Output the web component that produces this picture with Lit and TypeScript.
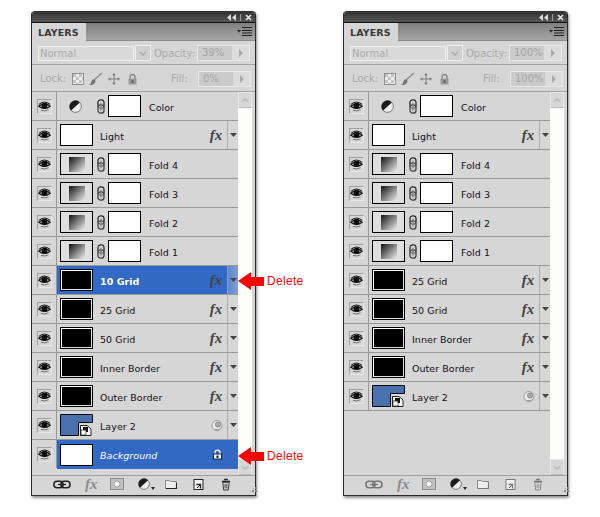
import { LitElement, html, css, svg } from "lit";
import { customElement } from "lit/decorators.js";

type Layer = {
  name: string;
  kind: "adjust" | "white" | "fold" | "black" | "smart" | "bg";
  fx?: boolean;
  selected?: boolean;
};

const top: Layer[] = [
  { name: "Color", kind: "adjust" },
  { name: "Light", kind: "white", fx: true },
  { name: "Fold 4", kind: "fold" },
  { name: "Fold 3", kind: "fold" },
  { name: "Fold 2", kind: "fold" },
  { name: "Fold 1", kind: "fold" },
];
const tail: Layer[] = [
  { name: "25 Grid", kind: "black", fx: true },
  { name: "50 Grid", kind: "black", fx: true },
  { name: "Inner Border", kind: "black", fx: true },
  { name: "Outer Border", kind: "black", fx: true },
  { name: "Layer 2", kind: "smart" },
];
const leftLayers: Layer[] = [
  ...top,
  { name: "10 Grid", kind: "black", fx: true, selected: true },
  ...tail,
  { name: "Background", kind: "bg", selected: true },
];
const rightLayers: Layer[] = [...top, ...tail];

const eye = html`<svg class="eye" viewBox="0 0 13 11" width="13" height="11">
  <path d="M.8 5.2 Q6.5 .2 12.2 5.2 Q6.5 9.6 .8 5.2Z" fill="#d0d0d0" stroke="#111" stroke-width="1.2"/>
  <path d="M1 3.4 Q6.5 -1.4 12 3.4" fill="none" stroke="#111" stroke-width="1.1"/>
  <circle cx="6.5" cy="4.8" r="3" fill="#080808"/>
  <path d="M3 9.4 Q7 10.8 10.5 8.8" fill="none" stroke="#666" stroke-width=".9"/>
</svg>`;

const chain = html`<svg class="chain" viewBox="0 0 8 15" width="8" height="15">
  <rect x="1" y=".8" width="6" height="8.4" rx="2.8" fill="#ddd" stroke="#2a2a2a" stroke-width="1.3"/>
  <rect x="1" y="5.8" width="6" height="8.4" rx="2.8" fill="#ccc" fill-opacity=".5" stroke="#444" stroke-width="1.3"/>
  <path d="M4 3.5V11.5" stroke="#777" stroke-width="1.2"/>
</svg>`;

const halfCircle = (size: number) => html`<svg viewBox="0 0 12 12" width=${size} height=${size}>
  <circle cx="6" cy="6" r="5.4" fill="#eee" stroke="#666" stroke-width=".8"/>
  <path d="M10 2.2A5.4 5.4 0 0 0 2 9.8Z" fill="#1c1c1c"/>
</svg>`;

const smartThumb = html`<svg class="thumbsvg" viewBox="0 0 33 22" width="33" height="22">
  <path d="M.5 .5H32.5V8.5H18.5V21.5H.5Z" fill="#4a71ad" stroke="#0a0a0a"/>
  <path d="M20.5 11.5H27L31 15V21.5H20.5Z" fill="#fff" stroke="#222"/>
  <rect x="23" y="13" width="5" height="5" fill="#111"/>
  <rect x="21" y="16" width="5" height="5" fill="#fff" stroke="#222" stroke-width=".7"/>
</svg>`;

const smartBadge = html`<svg viewBox="0 0 13 13" width="13" height="13">
  <circle cx="6" cy="6.5" r="5" fill="#eaeaea" stroke="#a0a0a0"/>
  <circle cx="7" cy="5.5" r="2.6" fill="#aaa" stroke="#777" stroke-width=".7"/>
  <path d="M4 10.5Q8 12 11 8" fill="none" stroke="#999"/>
</svg>`;

const lockWhite = html`<svg viewBox="0 0 11 11" width="11" height="11">
  <path d="M3 5V3.6A2.5 2.5 0 0 1 8 3.6V5" fill="none" stroke="#fff" stroke-width="1.3"/>
  <rect x="1" y="4.5" width="9" height="6" fill="#123" />
  <rect x="2" y="5.5" width="7" height="4" fill="#fff"/>
  <rect x="4.5" y="6.5" width="2" height="2.4" fill="#111"/>
</svg>`;

const redArrow = html`<svg viewBox="0 0 26 18" width="26" height="18">
  <path d="M0 9 L13 0 V5 H26 V14 H13 V18Z" fill="#f00"/>
</svg>`;

const icons = {
  collapse: html`<svg viewBox="0 0 9 7" width="9" height="7"><path d="M4 0V7L0 3.5ZM9 0V7L5 3.5Z" fill="#ddd"/></svg>`,
  close: html`<svg viewBox="0 0 7 7" width="7" height="7"><path d="M1 1L6 6M6 1L1 6" stroke="#e4e4e4" stroke-width="1.7"/></svg>`,
  menu: html`<svg viewBox="0 0 15 9" width="15" height="9">
    <path d="M0 3H4L2 5.4Z" fill="#222"/>
    <path d="M5 .5H15M5 3.5H15M5 6H15M5 8.5H15" stroke="#222" stroke-width="1"/>
  </svg>`,
  checker: html`<svg viewBox="0 0 12 12" width="12" height="12">
    <rect x=".5" y=".5" width="11" height="11" fill="#eee" stroke="#8e8e8e"/>
    <path d="M1 1h3v3H1zM7 1h3v3H7zM4 4h3v3H4zM10 4h1v3h-1zM1 7h3v3H1zM7 7h3v3H7zM4 10h3v1H4z" fill="#c4c4c4"/>
  </svg>`,
  brush: html`<svg viewBox="0 0 15 14" width="15" height="14">
    <path d="M14 1L6 8" stroke="#888" stroke-width="1.2"/>
    <path d="M6.5 7.5C3.5 7 3.5 9.5 3 11 2.5 12 1.5 12.5 1 12.5 4 14 7.5 12 7.6 9Z" fill="#777"/>
  </svg>`,
  move: html`<svg viewBox="0 0 13 13" width="12" height="12">
    <path d="M6.5 1V12M1 6.5H12" stroke="#777" stroke-width="1"/>
    <path d="M6.5 0L8.5 2.5H4.5ZM6.5 13L8.5 10.5H4.5ZM0 6.5L2.5 4.5V8.5ZM13 6.5L10.5 4.5V8.5Z" fill="#777"/>
  </svg>`,
  lock: html`<svg viewBox="0 0 11 12" width="11" height="12">
    <path d="M3 6V4A2.5 2.5 0 0 1 8 4V6" fill="none" stroke="#888" stroke-width="1.3"/>
    <rect x="1.5" y="5.5" width="8" height="6" fill="#999"/>
    <rect x="4.5" y="7" width="2" height="3" fill="#666"/>
  </svg>`,
  link: (c: string) => html`<svg viewBox="0 0 18 9" width="18" height="9">
    <rect x="1" y="1.2" width="9" height="6.6" rx="3" fill="none" stroke=${c} stroke-width="1.6"/>
    <rect x="8" y="1.2" width="9" height="6.6" rx="3" fill="none" stroke=${c} stroke-width="1.6"/>
    <path d="M5 4.5H13" stroke=${c} stroke-width="1.2"/>
  </svg>`,
  mask: html`<svg viewBox="0 0 14 12" width="14" height="12">
    <rect x=".5" y=".5" width="13" height="11" fill="#c0c0c0" stroke="#8c8c8c"/>
    <circle cx="7" cy="6" r="3" fill="#f6f6f6" stroke="#8a8a8a" stroke-width=".6"/>
  </svg>`,
  folder: (c: string) => html`<svg viewBox="0 0 12 10" width="12" height="10">
    <path d="M.5 1.5H4.5L5.5 2.5H11.5V9.5H.5Z" fill="#ededed" stroke="#888"/>
    <path d="M1 9.5H11.5V4" fill="none" stroke=${c} stroke-width="1.2"/>
  </svg>`,
  page: (c: string) => html`<svg viewBox="0 0 11 11" width="11" height="11">
    <rect x="1" y=".5" width="9" height="10" fill="#f2f2f2" stroke=${c}/>
    <path d="M3.5 5.5H7.5V9.5" fill="none" stroke=${c} stroke-width="1.3"/>
    <path d="M4 9L7 6" stroke=${c}/>
  </svg>`,
  trash: (c: string) => html`<svg viewBox="0 0 11 14" width="10" height="13">
    <path d="M3.5 1.5H7.5M1 3.5H10" stroke=${c} stroke-width="1.4"/>
    <path d="M2 4.5L3 13H8L9 4.5Z" fill="#eee" stroke=${c}/>
    <path d="M4.5 6V11.5M6.5 6V11.5" stroke=${c}/>
  </svg>`,
};

const triangle = svg`<path d="M0 0H7L3.5 4Z" fill="#444"/>`;

@customElement("layer-panel")
class LayerPanel extends LitElement {
  static properties = {
    layers: { attribute: false },
    opacity: {},
    fill: {},
    faint: { type: Boolean },
  };
  layers: Layer[] = [];
  opacity = "";
  fill = "";
  faint = false;

  static styles = css`
    :host {
      display: block;
      width: 225px;
      height: 485px;
      box-sizing: border-box;
      border: 1px solid #2a2a2a;
      border-top-color: #333;
      border-radius: 4px 4px 0 0;
      background: #d6d6d6;
      box-shadow: 1px 2px 3px rgba(0, 0, 0, 0.45);
      font: 9.5px "DejaVu Sans", sans-serif;
      color: #111;
    }
    .frame { display: flex; flex-direction: column; height: 100%; }
    .title {
      height: 11px;
      flex: none;
      background: linear-gradient(#333, #565656);
      border-bottom: 1px solid #111;
      box-sizing: border-box;
      display: flex;
      align-items: center;
      justify-content: flex-end;
      gap: 4px;
      padding-right: 3px;
      border-radius: 3px 3px 0 0;
    }
    .sep { width: 1px; height: 7px; background: #999; }
    .tabs {
      height: 18px;
      flex: none;
      display: flex;
      background: linear-gradient(#7f7f7f, #a4a4a4);
      border-bottom: 1px solid #8a8a8a;
      box-sizing: border-box;
    }
    .tab {
      width: 54px;
      padding-left: 6px;
      box-sizing: border-box;
      height: 18px;
      line-height: 19px;
      background: #d6d6d6;
      font-weight: bold;
      font-size: 9.5px;
      color: #3a3a3a;
      letter-spacing: 0.1px;
    }
    .tabgap { flex: 1; display: flex; justify-content: flex-end; align-items: center; padding-right: 3px; }
    .opts, .locks {
      flex: none;
      display: flex;
      align-items: center;
      box-sizing: border-box;
      color: #a9a9a9;
      padding: 1px 0 0 6px;
      border-bottom: 1px solid #a2a2a2;
    }
    .opts { height: 24px; }
    .locks { height: 27px; }
    .select {
      width: 96px;
      height: 15px;
      line-height: 13px;
      box-sizing: border-box;
      border: 1px solid #efefef;
      background: #dadada;
      padding-left: 1px;
      font-size: 10px;
    }
    .dd {
      width: 16px;
      height: 16px;
      margin-left: 1px;
      background: #cfcfcf;
      border: 1px solid #eee;
      box-sizing: border-box;
      display: flex;
      align-items: center;
      justify-content: center;
    }
    .oplabel { margin-left: 3px; width: 43px; font-size: 10px; }
    .field { display: flex; width: 53px; height: 16px; margin-left: 0; border: 1px solid #e8e8e8; box-sizing: border-box; }
    .value { flex: 1; background: #cbcbcb; line-height: 14px; padding-left: 4px; font-size: 10px; color: #a4a4a4; }
    .stepper { width: 17px; background: #dcdcdc; display: flex; align-items: center; justify-content: center; }
    .stepper i { border-left: 4px solid #aaa; border-top: 4px solid transparent; border-bottom: 4px solid transparent; }
    .locklabel { width: 34px; padding-left: 2px; box-sizing: border-box; font-size: 10px; }
    .lockicons {
      display: grid;
      grid-template-columns: 16px 20px 19px auto;
      align-items: center;
      width: 99px;
    }
    .filllabel { width: 27px; font-size: 10px; }
    .body { flex: 1; display: flex; min-height: 0; }
    .list { width: 206px; flex: none; }
    .row {
      display: flex;
      height: 29px;
      box-sizing: border-box;
      border-bottom: 1px solid #999;
      align-items: stretch;
    }
    .eyecell {
      width: 25px;
      flex: none;
      background: #d6d6d6;
      border-right: 1px solid #999;
      box-sizing: border-box;
      display: flex;
      align-items: center;
      justify-content: center;
    }
    .eyebox {
      width: 15px;
      height: 15px;
      box-sizing: border-box;
      border: 1px solid;
      border-color: #a0a0a0 #e6e6e6 #e6e6e6 #a0a0a0;
      display: flex;
      align-items: center;
      justify-content: center;
    }
    .main { flex: 1; display: flex; align-items: center; padding-left: 3px; min-width: 0; }
    .selected .main { background: #3169c4; color: #fff; }
    .row.bg { border-bottom-color: #d6d6d6; }
    .row.bg .main { margin-bottom: -1px; }
    .thumb {
      width: 33px;
      height: 22px;
      box-sizing: border-box;
      flex: none;
      border: 1px solid #000;
      background: #fff;
    }
    .thumb.black { background: #000; box-shadow: inset 1px 1px 0 0 #fff, inset -1px -1px 0 0 #ddd; }
    .thumb.fold { background: #dfdfdf; display: flex; align-items: center; justify-content: center; }
    .thumb.fold i { display: block; width: 16px; height: 15px; background: linear-gradient(135deg, #111, #f0f0f0); }
    .thumbsvg { display: block; flex: none; }
    .adj { width: 33px; display: flex; justify-content: center; flex: none; padding-right: 2px; box-sizing: border-box; }
    .chaincell { width: 15px; flex: none; display: flex; justify-content: center; }
    .name { margin-left: 7px; flex: 1; white-space: nowrap; letter-spacing: 0.05px; padding-top: 2px; }
    .hasmask .name { margin-left: 8px; }
    .row .b { font-weight: bold; }
    .row .i { font-style: italic; }
    .fx {
      font: italic bold 15px "Liberation Serif", serif;
      color: #444;
      width: 20px;
      flex: none;
      text-align: center;
      padding-right: 2px;
      box-sizing: border-box;
      line-height: 16px;
    }
    .badge { width: 20px; flex: none; display: flex; justify-content: center; }
    .badge.end { margin-right: 11px; }
    .more {
      width: 11px;
      flex: none;
      border-left: 1px solid #aaa;
      box-sizing: border-box;
      background: #d6d6d6;
      display: flex;
      align-items: center;
      justify-content: center;
    }
    .selected .more { background: linear-gradient(90deg, #5f87ca, #7d9fd8); border-left-color: #7fa0d8; }
    .scroll {
      width: 14px;
      flex: none;
      display: flex;
      flex-direction: column;
      background: #fdfdfb;
    }
    .sb { height: 16px; background: #d6d6d6; border: 1px solid #e8e8e8; border-bottom-color: #bbb; box-sizing: border-box; display: flex; align-items: center; justify-content: center; }
    .track { flex: 1; }
    .foot {
      height: 20px;
      flex: none;
      border-top: 1px solid #a0a0a0;
      box-sizing: border-box;
      display: grid;
      grid-template-columns: 32px 25px 28px 27px 28px 28px 28px 1fr;
      align-items: center;
      justify-items: start;
      padding: 0 0 3px 21px;
      background: #d6d6d6;
    }
    .foot .ffx { font: italic bold 15px "Liberation Serif", serif; color: #8a8a8a; line-height: 15px; }
    .adjfoot { display: flex; align-items: flex-end; gap: 1px; }
    .adjfoot i { border-top: 3px solid #222; border-left: 2px solid transparent; border-right: 2px solid transparent; }
    .grip {
      justify-self: end;
      align-self: end;
      width: 9px;
      height: 9px;
      margin: 0 1px -1px 0;
      background: radial-gradient(circle at 1px 1px, #888 1px, transparent 1px) 0 0 / 3px 3px;
      clip-path: polygon(100% 0, 100% 100%, 0 100%);
    }
  `;

  private thumb(l: Layer) {
    if (l.kind === "adjust") return html`<div class="adj">${halfCircle(13)}</div>`;
    if (l.kind === "fold") return html`<div class="thumb fold"><i></i></div>`;
    if (l.kind === "black") return html`<div class="thumb black"></div>`;
    if (l.kind === "smart") return smartThumb;
    return html`<div class="thumb"></div>`;
  }

  private row(l: Layer) {
    const masked = l.kind === "adjust" || l.kind === "fold";
    const more = l.fx || l.kind === "smart";
    return html`<div class="row ${l.selected ? "selected" : ""} ${l.kind === "bg" ? "bg" : ""} ${masked ? "hasmask" : ""}">
      <div class="eyecell"><div class="eyebox">${eye}</div></div>
      <div class="main">
        ${this.thumb(l)}
        ${masked ? html`<div class="chaincell">${chain}</div><div class="thumb"></div>` : ""}
        <div class="name ${l.kind === "bg" ? "i" : ""} ${l.selected && l.kind === "black" ? "b" : ""}">${l.name}</div>
        ${l.fx ? html`<div class="fx">fx</div>` : ""}
        ${l.kind === "smart" ? html`<div class="badge">${smartBadge}</div>` : ""}
        ${l.kind === "bg" ? html`<div class="badge end">${lockWhite}</div>` : ""}
      </div>
      ${more ? html`<div class="more"><svg viewBox="0 0 7 4" width="7" height="4">${triangle}</svg></div>` : ""}
    </div>`;
  }

  render() {
    const c = this.faint ? "#777" : "#222";
    return html`<div class="frame">
      <div class="title">${icons.collapse}<span class="sep"></span>${icons.close}</div>
      <div class="tabs">
        <div class="tab">LAYERS</div>
        <div class="tabgap">${icons.menu}</div>
      </div>
      <div class="opts">
        <div class="select">Normal</div>
        <div class="dd"><svg viewBox="0 0 8 5" width="8" height="5"><path d="M1 1L4 4L7 1" fill="none" stroke="#aaa" stroke-width="1.6"/></svg></div>
        <div class="oplabel">Opacity:</div>
        <div class="field"><div class="value">${this.opacity}</div><div class="stepper"><i></i></div></div>
      </div>
      <div class="locks">
        <div class="locklabel">Lock:</div>
        <div class="lockicons">${icons.checker}${icons.brush}${icons.move}${icons.lock}</div>
        <div class="filllabel">Fill:</div>
        <div class="field"><div class="value">${this.fill}</div><div class="stepper"><i></i></div></div>
      </div>
      <div class="body">
        <div class="list">${this.layers.map((l) => this.row(l))}</div>
        <div class="scroll">
          <div class="sb"><svg viewBox="0 0 8 5" width="8" height="5"><path d="M1 4L4 1L7 4" fill="none" stroke="#bbb" stroke-width="1.6"/></svg></div>
          <div class="track"></div>
          <div class="sb"><svg viewBox="0 0 8 5" width="8" height="5"><path d="M1 1L4 4L7 1" fill="none" stroke="#bbb" stroke-width="1.6"/></svg></div>
        </div>
      </div>
      <div class="foot">
        ${icons.link(c)}
        <div class="ffx">fx</div>
        ${icons.mask}
        <div class="adjfoot">${halfCircle(12)}<i></i></div>
        ${icons.folder(c)}
        ${icons.page(c)}
        ${icons.trash(c)}
        <div class="grip"></div>
      </div>
    </div>`;
  }
}

@customElement("app-root")
export class AppRoot extends LitElement {
  static styles = css`
    :host {
      display: block;
      position: relative;
      width: 600px;
      height: 517px;
      background: #fff;
      overflow: hidden;
    }
    .stage { display: flex; gap: 87px; padding: 11px 0 0 31px; }
    .note {
      position: absolute;
      left: 238px;
      display: flex;
      align-items: center;
      gap: 3px;
      color: #f00;
      font: 12px "Liberation Sans", Arial, sans-serif;
      letter-spacing: 0.3px;
      height: 18px;
    }
    .note.a { top: 272px; }
    .note.b { top: 447px; }
  `;

  render() {
    return html`<div class="stage">
        <layer-panel .layers=${leftLayers} opacity="39%" fill="0%"></layer-panel>
        <layer-panel .layers=${rightLayers} opacity="100%" fill="100%" faint></layer-panel>
      </div>
      <div class="note a">${redArrow}<span>Delete</span></div>
      <div class="note b">${redArrow}<span>Delete</span></div>`;
  }
}
